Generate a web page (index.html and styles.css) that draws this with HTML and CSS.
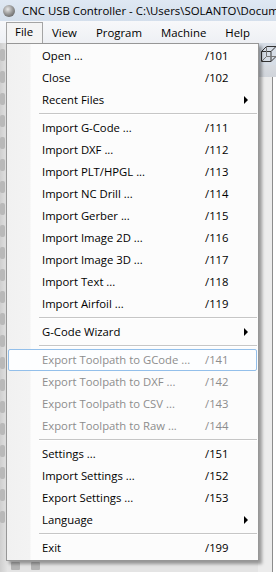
FILE: index.html
```html
<!DOCTYPE html>
<html>
<head>
<meta charset="utf-8">
<link rel="stylesheet" href="styles.css">
</head>
<body>
<div class="window">
  <div class="titlebar">
    <span class="appicon"></span>
    <span class="title">CNC USB Controller - C:\Users\SOLANTO\Documents\CNC</span>
  </div>
  <div class="menubar">
    <span class="mlabel open">File</span>
    <span class="mlabel">View</span>
    <span class="mlabel">Program</span>
    <span class="mlabel">Machine</span>
    <span class="mlabel">Help</span>
  </div>
  <div class="client">
    <div class="lefttool">
      <span class="ti"></span><span class="ti"></span><span class="ti"></span><span class="ti"></span><span class="ti"></span><span class="ti"></span><span class="ti"></span><span class="ti"></span><span class="ti"></span><span class="ti"></span><span class="ti"></span><span class="ti"></span><span class="ti"></span><span class="ti"></span><span class="ti"></span><span class="ti"></span><span class="ti"></span><span class="ti"></span><span class="ti"></span><span class="ti"></span><span class="ti"></span><span class="ti"></span>
    </div>
    <div class="workspace">
      <div class="bottomtools"><span class="bi"></span><span class="bi"></span></div>
    </div>
    <div class="righttool">
      <div class="cubebar">
        <svg class="cube" width="18" height="22" viewBox="0 0 18 22">
          <rect x="0" y="0" width="18" height="22" fill="#d6dde6"/>
          <path d="M3.5 8.5 L8.5 3.5 H18 M3.5 8.5 H13 L18 3.5 M3.5 8.5 V18.5 H13 V8.5 M13 18.5 L18 13.5" fill="none" stroke="#333" stroke-width="1"/>
          <path d="M8.5 3.5 V13.5 H18 M8.5 13.5 L3.5 18.5" fill="none" stroke="#777" stroke-width="1"/>
        </svg>
      </div>
      <div class="rightpanel"></div>
    </div>
  </div>

  <div class="dropdown">
    <div class="item"><span class="lbl">Open ...</span><span class="sc">/101</span><span></span></div>
    <div class="item"><span class="lbl">Close</span><span class="sc">/102</span><span></span></div>
    <div class="item"><span class="lbl">Recent Files</span><span class="sc"></span><span class="arrow"></span></div>
    <div class="sep"></div>
    <div class="item"><span class="lbl">Import G-Code ...</span><span class="sc">/111</span><span></span></div>
    <div class="item"><span class="lbl">Import DXF ...</span><span class="sc">/112</span><span></span></div>
    <div class="item"><span class="lbl">Import PLT/HPGL ...</span><span class="sc">/113</span><span></span></div>
    <div class="item"><span class="lbl">Import NC Drill ...</span><span class="sc">/114</span><span></span></div>
    <div class="item"><span class="lbl">Import Gerber ...</span><span class="sc">/115</span><span></span></div>
    <div class="item"><span class="lbl">Import Image 2D ...</span><span class="sc">/116</span><span></span></div>
    <div class="item"><span class="lbl">Import Image 3D ...</span><span class="sc">/117</span><span></span></div>
    <div class="item"><span class="lbl">Import Text ...</span><span class="sc">/118</span><span></span></div>
    <div class="item"><span class="lbl">Import Airfoil ...</span><span class="sc">/119</span><span></span></div>
    <div class="sep"></div>
    <div class="item"><span class="lbl">G-Code Wizard</span><span class="sc"></span><span class="arrow"></span></div>
    <div class="sep"></div>
    <div class="item disabled hot"><span class="lbl">Export Toolpath to GCode ...</span><span class="sc">/141</span><span></span></div>
    <div class="item disabled"><span class="lbl">Export Toolpath to DXF ...</span><span class="sc">/142</span><span></span></div>
    <div class="item disabled"><span class="lbl">Export Toolpath to CSV ...</span><span class="sc">/143</span><span></span></div>
    <div class="item disabled"><span class="lbl">Export Toolpath to Raw ...</span><span class="sc">/144</span><span></span></div>
    <div class="sep"></div>
    <div class="item"><span class="lbl">Settings ...</span><span class="sc">/151</span><span></span></div>
    <div class="item"><span class="lbl">Import Settings ...</span><span class="sc">/152</span><span></span></div>
    <div class="item"><span class="lbl">Export Settings ...</span><span class="sc">/153</span><span></span></div>
    <div class="item"><span class="lbl">Language</span><span class="sc"></span><span class="arrow"></span></div>
    <div class="sep"></div>
    <div class="item"><span class="lbl">Exit</span><span class="sc">/199</span><span></span></div>
  </div>
</div>
</body>
</html>
```

FILE: styles.css
```css
html, body {
  margin: 0;
  padding: 0;
}
body {
  width: 276px;
  height: 572px;
  overflow: hidden;
  font-family: "Open Sans", "Noto Sans", sans-serif;
  font-size: 11.3px;
  color: #000;
  background: #f0f0f0;
}
.window {
  position: relative;
  width: 276px;
  height: 572px;
  overflow: hidden;
  display: flex;
  flex-direction: column;
}
.titlebar {
  height: 21px;
  flex: none;
  display: flex;
  align-items: center;
  background: linear-gradient(#dfe8f3, #d4dfec);
  white-space: nowrap;
  overflow: hidden;
}
.appicon {
  flex: none;
  width: 12px;
  height: 12px;
  margin-left: 3px;
  margin-right: 7px;
  border-radius: 50%;
  background: radial-gradient(circle at 40% 35%, #e8e8e8 0, #9a9a9a 45%, #4a4a4a 100%);
}
.title {
  font-size: 11.4px;
  line-height: 21px;
}
.menubar {
  height: 22px;
  flex: none;
  display: flex;
  align-items: flex-end;
  padding-left: 6px;
  background: linear-gradient(#f7f8fa, #eef0f4);
  white-space: nowrap;
}
.mlabel {
  display: block;
  height: 19px;
  line-height: 18px;
  padding: 0 9px 0 8px;
  border: 1px solid transparent;
  border-bottom: none;
  font-size: 11.4px;
}
.mlabel.open {
  border-color: #a4a4a4;
  background: #f4f4f4;
  position: relative;
  z-index: 3;
  height: 20px;
}
.client {
  flex: 1;
  display: flex;
}
.lefttool {
  width: 7px;
  flex: none;
  background: linear-gradient(to right, #cfcfcf, #e2e2e2);
  display: flex;
  flex-direction: column;
  padding-top: 6px;
  gap: 10px;
  overflow: hidden;
}
.ti {
  width: 5px;
  height: 12px;
  border-radius: 2px;
  background: #b9b9b9;
}
.workspace {
  flex: 1;
  display: flex;
  flex-direction: column;
  justify-content: flex-end;
}
.bottomtools {
  height: 12px;
  display: flex;
  gap: 11px;
  padding-left: 4px;
  background: #e4e4e4;
}
.bi {
  width: 9px;
  height: 8px;
  margin-top: 2px;
  background: #b4b4b4;
  border-radius: 1px;
}
.righttool {
  width: 18px;
  flex: none;
  display: flex;
  flex-direction: column;
}
.cubebar {
  height: 34px;
  background: linear-gradient(#e6e9ee, #d0d4da);
}
.cube {
  display: block;
}
.rightpanel {
  flex: 1;
  background: #ececec;
  border-right: 3px solid #fff;
  box-shadow: inset -1px 0 0 #8c8c8c;
}
.dropdown {
  position: absolute;
  left: 6px;
  top: 43px;
  width: 253px;
  box-sizing: border-box;
  border: 1px solid #979797;
  padding: 1px 0 1px;
  z-index: 2;
  background: linear-gradient(to right, #f1f1f1 0, #f3f3f3 23px, #fcfcfc 24px, #fcfcfc 100%);
  box-shadow: 3px 3px 3px rgba(0, 0, 0, 0.35);
}
.item {
  height: 22px;
  box-sizing: border-box;
  margin: 0 1px;
  border: 1px solid transparent;
  border-radius: 2px;
  padding-left: 33px;
  display: grid;
  grid-template-columns: 163px 39px 1fr;
  align-items: center;
  white-space: nowrap;
  line-height: 20px;
}
.item.disabled {
  color: #8d8d8d;
}
.item.hot {
  border-color: #93bfea;
  background: #fdfeff;
}
.arrow {
  width: 0;
  height: 0;
  border-left: 4px solid #000;
  border-top: 4px solid transparent;
  border-bottom: 4px solid transparent;
}
.sep {
  height: 6px;
  margin-left: 32px;
  margin-right: 1px;
  box-sizing: border-box;
  padding-top: 2px;
}
.sep::before {
  content: "";
  display: block;
  height: 1px;
  background: #c6c6c6;
  border-bottom: 1px solid #ffffff;
}
```
